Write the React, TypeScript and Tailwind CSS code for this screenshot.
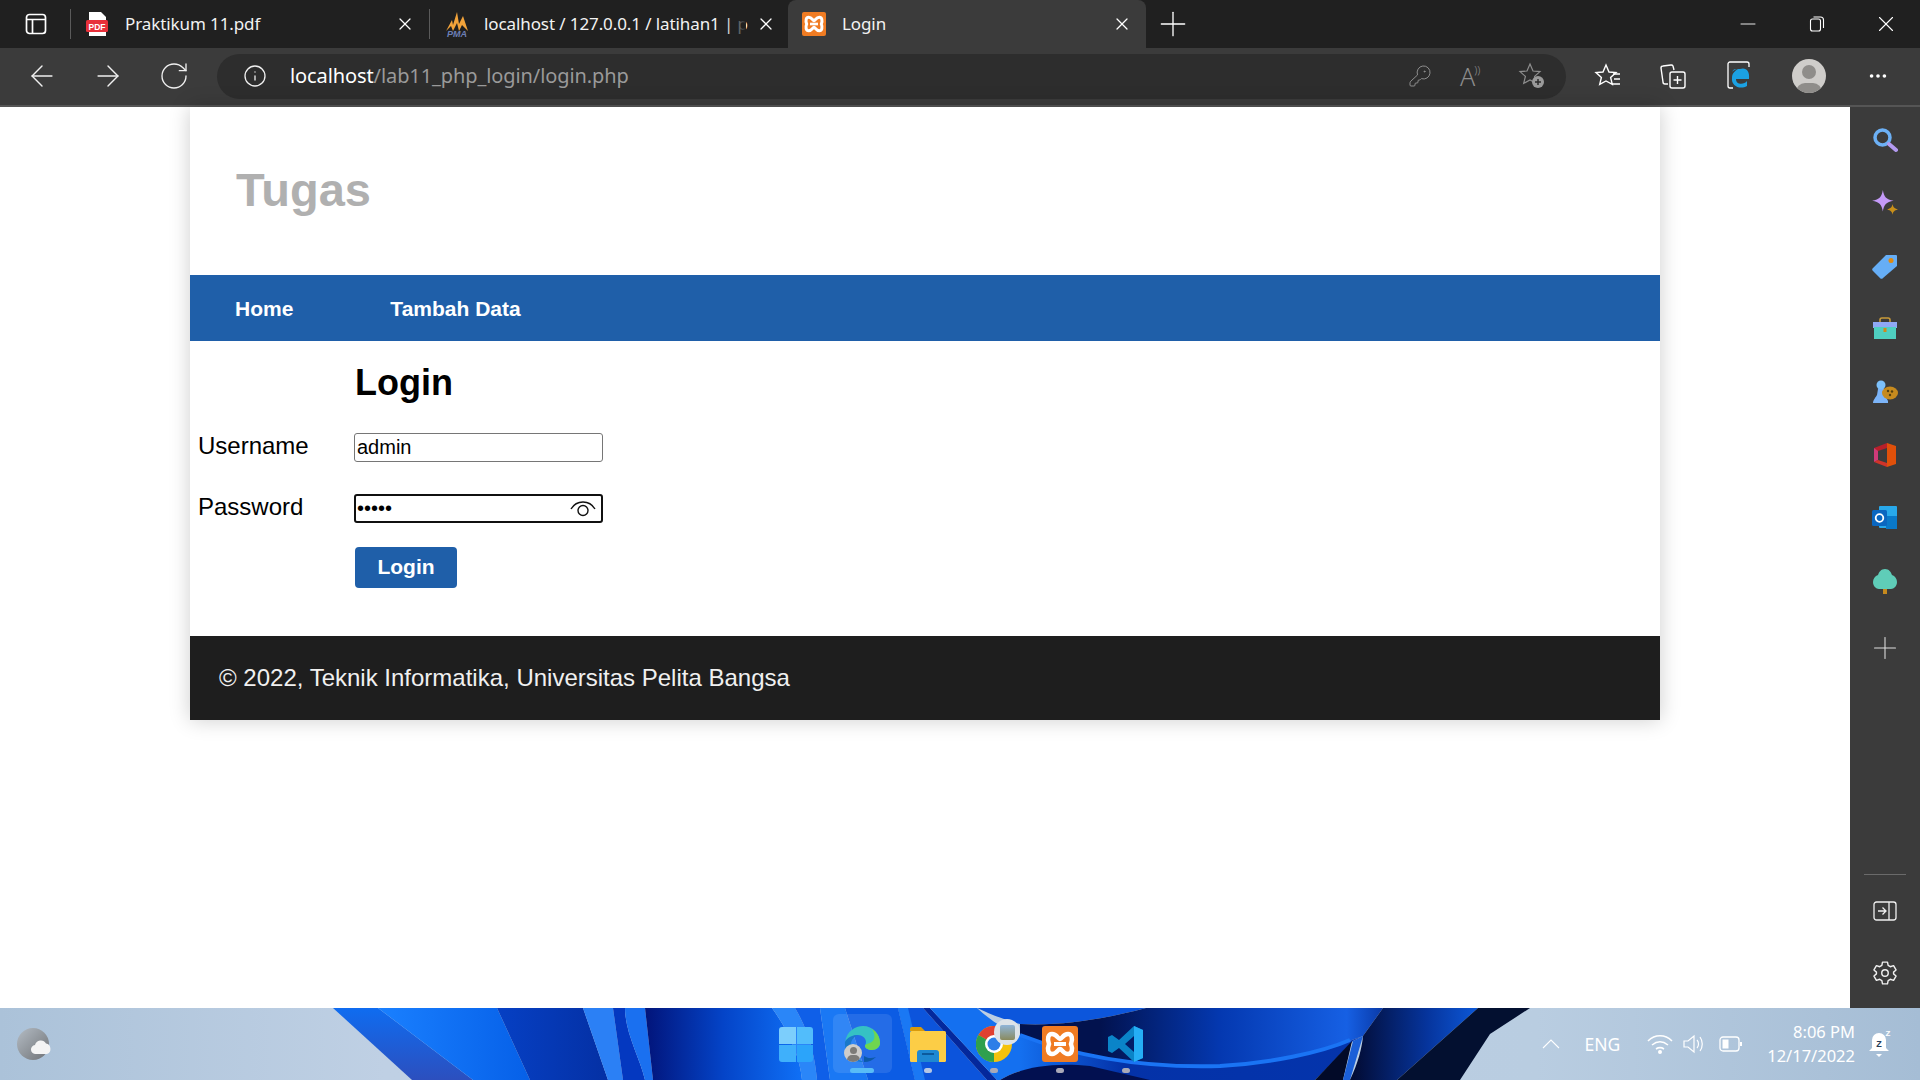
import { ArrowLeft, ArrowRight, RotateCw, Info, KeyRound, Plus, X, Minus, Ellipsis } from "lucide-react";

const ui = "font-['Noto_Sans','Open_Sans',sans-serif]";
const page = "font-['Liberation_Sans',Arial,sans-serif]";

function PdfIcon() {
  return (
    <svg width="24" height="26" viewBox="0 0 24 26">
      <path d="M4 1h12l5 5v19H4z" fill="#fff" />
      <rect x="1" y="9" width="22" height="12" rx="1.5" fill="#e8303a" />
      <text x="12" y="18.5" textAnchor="middle" fontSize="8.5" fontWeight="700" fill="#fff" fontFamily="Liberation Sans">PDF</text>
    </svg>
  );
}

function PmaIcon() {
  return (
    <svg width="26" height="26" viewBox="0 0 26 26">
      <path d="M2 20 L8 9 L9 14 L13 1 L15 13 L19 5 L24 20 L18 14 L15 20 L13 12 L9 20 L7 15z" fill="#f2a33a" />
      <text x="13" y="25.5" textAnchor="middle" fontSize="9" fontWeight="700" fontStyle="italic" fill="#6d7fb5" fontFamily="Liberation Sans">PMA</text>
    </svg>
  );
}

function XamppIcon({ size = 24 }: { size?: number }) {
  return (
    <svg width={size} height={size} viewBox="0 0 36 36">
      <rect width="36" height="36" rx="3" fill="#f07c23" />
      <path d="M10 8c5 0 6 5 8 5s3-5 8-5c4 0 5 5 3 10 2 5 1 10-3 10-5 0-6-5-8-5s-3 5-8 5c-4 0-5-5-3-10-2-5-1-10 3-10z" fill="none" stroke="#fff" strokeWidth="4.5" />
      <path d="M12 18h12" stroke="#fff" strokeWidth="4" />
    </svg>
  );
}

function Tab({ icon, title, active, fade }: { icon: React.ReactNode; title: string; active?: boolean; fade?: boolean }) {
  return (
    <div className={`relative flex h-full w-[358px] items-center pl-[14px] pr-[14px] ${active ? "rounded-t-lg bg-[#3b3b3b]" : ""}`}>
      <div className="flex w-[40px] shrink-0 items-center">{icon}</div>
      <span className="relative flex-1 whitespace-nowrap text-[17px] tracking-[-0.1px] text-[#f2f2f2]">
        {title}
        {fade && <span className="absolute right-[2px] top-0 h-full w-[20px] bg-gradient-to-r from-transparent to-[#202020]" />}
      </span>
      <X className="ml-[8px] shrink-0 text-white" size={20} strokeWidth={1.5} />
    </div>
  );
}

function TabBar() {
  return (
    <div className={`flex h-[48px] items-center bg-[#202020] ${ui}`}>
      <div className="flex w-[70px] items-center justify-center pl-[1px]">
        <svg width="22" height="22" viewBox="0 0 22 22" fill="none" stroke="#fff" strokeWidth="1.7">
          <rect x="1.5" y="1.5" width="19" height="19" rx="3" />
          <path d="M1.5 6.5h19M7.5 6.5v14" />
        </svg>
      </div>
      <div className="h-[30px] w-px bg-[#5a5a5a]" />
      <Tab icon={<PdfIcon />} title="Praktikum 11.pdf" />
      <div className="h-[30px] w-px bg-[#5a5a5a]" />
      <Tab icon={<PmaIcon />} title="localhost / 127.0.0.1 / latihan1 | p" fade />
      <Tab icon={<XamppIcon />} title="Login" active />
      <Plus className="ml-[7px] text-white" size={40} strokeWidth={0.8} />
      <div className="ml-auto flex items-center">
        <div className="flex w-[69px] justify-center"><Minus className="text-white" size={24} strokeWidth={0.9} /></div>
        <div className="flex w-[69px] justify-center">
          <svg width="16" height="16" viewBox="0 0 16 16" fill="none" stroke="#fff" strokeWidth="1.1">
            <rect x="1.5" y="3" width="10" height="12" rx="2" />
            <path d="M4.5 1h7a3 3 0 0 1 3 3v8" />
          </svg>
        </div>
        <div className="flex w-[69px] justify-center"><X className="text-white" size={26} strokeWidth={1} /></div>
      </div>
    </div>
  );
}

function ToolBar() {
  return (
    <div className={`flex h-[59px] items-center border-b-2 border-[#555] bg-[#3b3b3b] pb-[1px] ${ui}`}>
      <div className="flex w-[217px] items-center pl-[25px] text-[#f0f0f0]">
        <ArrowLeft size={34} strokeWidth={1} />
        <ArrowRight className="ml-[32px]" size={34} strokeWidth={1} />
        <RotateCw className="ml-[33px]" size={32} strokeWidth={1} />
      </div>
      <div className="flex h-[45px] w-[1349px] items-center rounded-full bg-[#2d2d2d] pl-[26px] pr-[20px]">
        <Info className="text-[#f0f0f0]" size={24} strokeWidth={1.3} />
        <span className="ml-[23px] text-[20px] tracking-[-0.1px] text-white">
          localhost<span className="text-[#9a9a9a]">/lab11_php_login/login.php</span>
        </span>
        <div className="ml-auto flex items-center gap-[28px] text-[#8e8e8e]">
          <KeyRound size={24} strokeWidth={1} />
          <span className="flex w-[30px] items-start text-[25px] font-light leading-none">A<span className="-ml-[1px] text-[11px]">))</span></span>
          <svg width="28" height="28" viewBox="0 0 28 28" fill="none" stroke="#8e8e8e" strokeWidth="1.2">
            <path d="M12 2l3 7 7 .6-5.4 4.8 1.7 7L12 18l-6.300 3.400 1.700-7L2 9.600 9 9z" />
            <circle cx="20" cy="20" r="6" fill="#9a9a9a" stroke="none" />
            <path d="M20 17v6M17 20h6" stroke="#2d2d2d" strokeWidth="1.5" />
          </svg>
        </div>
      </div>
      <div className="flex flex-1 items-center pl-[28px] text-white">
        <svg width="28" height="28" viewBox="0 0 28 28" fill="none" stroke="#fff" strokeWidth="1.4">
          <path d="M12 3l3 7 7 .6-5.400 4.800 1.700 7L12 19l-6.300 3.400 1.700-7L2 10.600 9 10z" />
          <path d="M19 12h7M20 17h6M18 22h8" />
        </svg>
        <svg className="ml-[37px]" width="28" height="28" viewBox="0 0 28 28" fill="none" stroke="#fff" strokeWidth="1.4">
          <path d="M9 22H6a2 2 0 0 1-2-2L2 6a2 2 0 0 1 2-2l8-1a2 2 0 0 1 2 1l1 4" />
          <rect x="11" y="10" width="15" height="16" rx="2" fill="#3b3b3b" />
          <path d="M18.500 14v8M14.500 18h8" />
        </svg>
        <svg className="ml-[38px]" width="28" height="32" viewBox="0 0 28 32" fill="none">
          <path d="M8 28H5a2 2 0 0 1-2-2V4a2 2 0 0 1 2-2h17a2 2 0 0 1 2 2v3" stroke="#fff" strokeWidth="1.3" />
          <path d="M15 9c6-2 10 2 9 10H11c0 6 8 6 11 2v5c-7 4-16 0-15-8 0-5 3-7 6-9-3 0-5 2-6 3 1-2 2-3 4-3z" fill="#1ba1e2" />
        </svg>
        <div className="relative ml-[39px] h-[34px] w-[34px] overflow-hidden rounded-full bg-[#cfcdca]">
          <div className="mx-auto mt-[6px] h-[14px] w-[14px] rounded-full bg-[#8f8d8a]" />
          <div className="absolute -bottom-[8px] left-[4px] h-[18px] w-[26px] rounded-full bg-[#8f8d8a]" />
        </div>
        <Ellipsis className="ml-[41px]" size={22} />
      </div>
    </div>
  );
}

function Sidebar() {
  return (
    <aside className="flex w-[70px] shrink-0 flex-col items-center bg-[#3b3b3b] pt-[20px] pb-[22px]">
      <div className="flex flex-col items-center gap-[37px]">
        <svg width="26" height="26" viewBox="0 0 26 26" fill="none">
          <circle cx="10.500" cy="10.500" r="7.500" stroke="#6cb0f5" strokeWidth="3.500" />
          <path d="M17 17l7 6" stroke="#b39af0" strokeWidth="4" strokeLinecap="round" />
        </svg>
        <svg width="28" height="26" viewBox="0 0 26 24">
          <path d="M11 0c1 6 3 9 10 10-7 1-9 4-10 10-1-6-3-9-10-10 7-1 9-4 10-10z" fill="#c49af8" />
          <path d="M20 13c.5 3 1.500 4 5 5-3.500 1-4.500 2-5 5-.5-3-1.500-4-5-5 3.500-1 4.500-2 5-5z" fill="#c88f1a" />
        </svg>
        <svg width="26" height="26" viewBox="0 0 26 26">
          <path d="M1 15L14 2h10a1 1 0 0 1 1 1v10L11 25a2 2 0 0 1-3 0L1 18a2 2 0 0 1 0-3z" fill="#66aef6" />
          <circle cx="19" cy="7.500" r="2.500" fill="#e08a10" />
        </svg>
        <svg width="26" height="26" viewBox="0 0 26 26">
          <path d="M8 7V4a2 2 0 0 1 2-2h6a2 2 0 0 1 2 2v3" fill="none" stroke="#c89a3a" strokeWidth="1.600" />
          <rect x="1" y="6" width="24" height="6" fill="#8fa8f5" />
          <rect x="2" y="11" width="22" height="12" fill="#4fcfc0" />
          <rect x="11.500" y="12" width="3" height="4" fill="#d08a1a" />
        </svg>
        <svg width="26" height="26" viewBox="0 0 26 26">
          <circle cx="9" cy="6" r="4.500" fill="#7cc0fa" />
          <path d="M6 10h6l1 6 3 6v2H1c0-3 3-6 4-8z" fill="#7cb4f8" />
          <ellipse cx="18" cy="14" rx="8" ry="6.500" fill="#c68a1e" />
          <circle cx="16" cy="12" r="1.200" fill="#55400f" />
          <circle cx="20" cy="12.500" r="1.200" fill="#55400f" />
          <circle cx="18" cy="16" r="1.200" fill="#55400f" />
        </svg>
        <svg width="26" height="26" viewBox="0 0 26 26">
          <path d="M2 6l13-5v5L6 9v9l-4 2z" fill="#b8202a" />
          <path d="M2 6l4 3v9l-4 2z" fill="#cf3a7a" />
          <path d="M2 20l4-2 9 3v4z" fill="#d0342a" />
          <path d="M15 1l9 3v18l-9 3z" fill="#e0500a" />
        </svg>
        <svg width="26" height="26" viewBox="0 0 26 26">
          <rect x="7" y="1" width="18" height="22" rx="1" fill="#28a8ea" />
          <rect x="14" y="11" width="11" height="13" fill="#0a78c8" />
          <rect x="0" y="5" width="15" height="16" rx="1.500" fill="#0a66c0" />
          <circle cx="7.500" cy="13" r="3.800" fill="none" stroke="#fff" strokeWidth="1.800" />
        </svg>
        <svg width="26" height="26" viewBox="0 0 26 26">
          <rect x="11" y="19" width="4" height="7" fill="#c68a1e" />
          <path d="M13 1c4 0 6 3 7 6 3 1 5 4 5 7 0 4-3 7-6 7H7c-3 0-6-3-6-7 0-3 2-6 5-7 1-3 3-6 7-6z" fill="#5fcdb8" />
        </svg>
      </div>
      <Plus className="mt-[36px] text-[#e0e0e0]" size={36} strokeWidth={0.7} />
      <div className="mt-auto h-px w-[42px] bg-[#6a6a6a]" />
      <svg className="mt-[26px]" width="24" height="20" viewBox="0 0 24 20" fill="none" stroke="#f0f0f0" strokeWidth="1.300">
        <rect x="1" y="1" width="22" height="18" rx="2.500" />
        <path d="M16 1v18M5 10h8M9.500 6.500L13 10l-3.500 3.500" />
      </svg>
      <svg className="mt-[39px]" width="26" height="26" viewBox="0 0 24 24" fill="none" stroke="#f0f0f0" strokeWidth="1.300" strokeLinejoin="round">
        <path d="M9.700 2h4.600l.6 3 2 1.200 3-1 2.300 4-2.300 2v1.600l2.300 2-2.300 4-3-1-2 1.200-.6 3H9.700l-.6-3-2-1.200-3 1-2.300-4 2.300-2v-1.600l-2.300-2 2.300-4 3 1 2-1.200z" />
        <circle cx="12" cy="12" r="3" />
      </svg>
    </aside>
  );
}

function Field({ label, children }: { label: string; children: React.ReactNode }) {
  return (
    <div className="flex h-[29px] items-center">
      <label className="w-[164px] pl-[8px] pb-[4px] text-[24px] text-black">{label}</label>
      {children}
    </div>
  );
}

function WebPage() {
  return (
    <main className={`min-w-0 flex-1 bg-white ${page}`}>
      <div className="ml-[190px] w-[1470px] shadow-[0_0_20px_rgba(0,0,0,0.2)]">
        <header className="flex h-[168px] items-center pb-[2px] pl-[46px]">
          <h1 className="text-[47px] font-bold text-[#b0b0b0]">Tugas</h1>
        </header>
        <nav className="flex h-[66px] items-center bg-[#1f5fa9] pl-[45px] pt-[1px] text-[21px] font-bold text-white">
          <a>Home</a>
          <a className="ml-[97px]">Tambah Data</a>
        </nav>
        <div className="h-[295px]">
          <h2 className="pl-[165px] pt-[21px] text-[36px] leading-[42px] font-bold text-black">Login</h2>
          <div className="mt-[29px]">
            <Field label="Username">
              <div className="flex h-[29px] w-[249px] items-center rounded-[3px] border border-[#767676] pb-[1px] pl-[2px] text-[20px] text-black">admin</div>
            </Field>
            <div className="mt-[32px]">
              <Field label="Password">
                <div className="flex h-[29px] w-[249px] items-center justify-between rounded-[3px] border-[2.500px] border-[#101010] pl-[1px] pr-[5px]">
                  <span className="pb-[2px] text-[20px] leading-none text-black">•••••</span>
                  <svg width="26" height="17" viewBox="0 0 26 17" fill="none" stroke="#111" strokeWidth="1.400">
                    <path d="M1 9c3-5 7-7 12-7s9 2 12 7" />
                    <circle cx="13" cy="10.500" r="5" />
                  </svg>
                </div>
              </Field>
            </div>
            <button className="ml-[165px] mt-[24px] h-[41px] w-[102px] rounded-[4px] bg-[#1f5fa9] pb-[2px] text-[21px] font-bold text-white">Login</button>
          </div>
        </div>
        <footer className="flex h-[84px] items-center bg-[#1e1e1e] pl-[29px] text-[24px] text-[#f0f0f0]">
          © 2022, Teknik Informatika, Universitas Pelita Bangsa
        </footer>
      </div>
    </main>
  );
}

function Wallpaper() {
  return (
    <svg className="absolute inset-0" width="1920" height="72" viewBox="0 0 1920 72">
      <defs>
        <linearGradient id="wpBase" x1="0" x2="1" y1="0" y2="0">
          <stop offset="0" stopColor="#abc2d9" />
          <stop offset="0.2" stopColor="#bfd0e4" />
          <stop offset="0.8" stopColor="#b9cde1" />
          <stop offset="1" stopColor="#a5bdd5" />
        </linearGradient>
        <linearGradient id="wpEdge" x1="0" x2="0" y1="0" y2="1">
          <stop offset="0" stopColor="#0f6cf0" />
          <stop offset="1" stopColor="#2c4fbe" />
        </linearGradient>
        <linearGradient id="wpBright" x1="0" x2="1" y1="0" y2="0">
          <stop offset="0" stopColor="#1a80ff" />
          <stop offset="1" stopColor="#0660e8" />
        </linearGradient>
        <linearGradient id="wpDeep" x1="0" x2="1" y1="0" y2="0">
          <stop offset="0" stopColor="#0640c4" />
          <stop offset="1" stopColor="#0430a4" />
        </linearGradient>
        <linearGradient id="wpNavy" x1="0" x2="1" y1="0" y2="0">
          <stop offset="0" stopColor="#02147a" />
          <stop offset="0.5" stopColor="#0444c8" />
          <stop offset="1" stopColor="#0f70f6" />
        </linearGradient>
        <linearGradient id="wpUpper" x1="0" x2="1" y1="0" y2="0">
          <stop offset="0" stopColor="#02124e" />
          <stop offset="0.22" stopColor="#02124e" />
          <stop offset="0.55" stopColor="#0438b0" />
          <stop offset="0.9" stopColor="#1660e4" />
          <stop offset="1" stopColor="#0a3aa8" />
        </linearGradient>
        <linearGradient id="wpLower" x1="0" x2="1" y1="0" y2="0">
          <stop offset="0" stopColor="#1470f0" />
          <stop offset="0.3" stopColor="#0432a8" />
          <stop offset="1" stopColor="#0434ac" />
        </linearGradient>
        <linearGradient id="wpFold" x1="0" x2="1" y1="0" y2="0">
          <stop offset="0" stopColor="#020a30" />
          <stop offset="0.6" stopColor="#06349c" />
          <stop offset="1" stopColor="#0c58d8" />
        </linearGradient>
      </defs>
      <rect width="1920" height="72" fill="url(#wpBase)" />
      <path d="M333 0H378L473 72H412z" fill="url(#wpEdge)" />
      <path d="M378 0H497L530 72H473z" fill="url(#wpBright)" />
      <path d="M497 0H583L608 72H530z" fill="url(#wpDeep)" />
      <path d="M583 0H613L623 72H608z" fill="#2b80f5" />
      <path d="M613 0H625C625 25 640 50 645 72H623z" fill="#0438c0" />
      <path d="M625 0H645L653 72H645C640 50 625 25 625 0z" fill="#1a70f0" />
      <path d="M645 0H772C790 25 800 50 802 72H653z" fill="url(#wpNavy)" />
      <path d="M772 0H795C810 25 815 50 817 72H802C800 50 790 25 772 0z" fill="#2a86f8" />
      <path d="M795 0H820L830 72H817C815 50 810 25 795 0z" fill="#0f5fe8" />
      <path d="M820 0H845L868 72H830z" fill="#1a78f4" />
      <path d="M845 0H898L915 72H868z" fill="#0c5ce4" />
      <path d="M898 0H923L987 72H915z" fill="#0c54dc" />
      <path d="M898 0H908L925 72H915z" fill="#1a78f4" />
      <path d="M923 0H930L997 72H987z" fill="#04289c" />
      <path d="M930 0H977C990 12 1005 22 1020 27L1100 50L1090 58C1050 54 1020 60 1000 72H997z" fill="#1470f0" />
      <path d="M977 0H1146C1100 12 1060 18 1020 16C1005 12 990 6 977 0z" fill="#0c56dc" />
      <path d="M1020 16C1060 18 1100 12 1146 0H1383L1363 28C1320 45 1270 55 1220 58C1150 60 1080 50 1020 27z" fill="url(#wpUpper)" />
      <path d="M1020 27C1080 50 1150 60 1220 58C1270 55 1320 45 1363 28L1353 33L1315 72H1020z" fill="url(#wpLower)" />
      <path d="M1000 72C1020 60 1050 54 1090 58L1150 72z" fill="#021050" />
      <path d="M1020 27C1080 50 1150 60 1220 58C1270 55 1320 45 1350 32" fill="none" stroke="#1a74f4" strokeWidth="4" />
      <path d="M1352 33L1315 72H1343z" fill="#020a28" />
      <path d="M1363 28L1353 33L1343 72H1350z" fill="#1a5fd8" />
      <path d="M1383 0H1478L1397 72H1350C1358 55 1362 40 1363 28z" fill="url(#wpFold)" />
      <path d="M1478 0H1530L1490 26L1460 72H1397z" fill="#031030" />
    </svg>
  );
}

function TaskbarIcons() {
  return (
    <div className="relative ml-[2px] flex items-center gap-[30px]">
      <div className="absolute left-[55px] top-[-12px] h-[59px] w-[59px] rounded-[6px] bg-white/10" />
      <div className="relative grid h-[35px] w-[36px] grid-cols-2 gap-[1px] px-[1px]">
        <div className="rounded-tl-[3px] bg-[#7ccefc]" />
        <div className="rounded-tr-[3px] bg-[#52bdfb]" />
        <div className="rounded-bl-[3px] bg-[#3fb0fb]" />
        <div className="rounded-br-[3px] bg-[#2ba4fa]" />
      </div>
      <div className="relative h-[36px] w-[36px]">
        <svg width="36" height="36" viewBox="0 0 36 36">
          <path d="M1 16C3 5 11 0 19 0c10 0 17 8 17 17 0 4-3 7-8 7-4 0-7-2-7-4 0-1 1-2 1-4 0-4-4-7-8-7C8 9 3 12 1 16z" fill="#35c1c4" />
          <path d="M28 24c4 0 8-3 8-7 0-6-3-11-8-14 4 6 3 12-2 14-2 1-5 1-5 3 0 2 3 4 7 4z" fill="#6fd64f" />
          <path d="M1 16c2-4 7-7 13-7-7 3-8 9-7 15 1 5 6 10 13 12C9 37 0 28 1 16z" fill="#1a78c9" />
          <path d="M20 36c5 0 9-2 12-5-5 2-9 1-12-1z" fill="#0c5aa8" />
        </svg>
        <div className="absolute bottom-0 left-0 h-[18px] w-[18px] overflow-hidden rounded-full bg-[#cfcdca]">
          <div className="mx-auto mt-[3px] h-[7px] w-[7px] rounded-full bg-[#7d7b78]" />
          <div className="mx-auto mt-[1px] h-[10px] w-[13px] rounded-full bg-[#7d7b78]" />
        </div>
        <div className="absolute -bottom-[11px] left-[6px] h-[5px] w-[24px] rounded-full bg-[#58bcf7]" />
      </div>
      <div className="relative h-[36px] w-[36px]">
        <svg width="36" height="36" viewBox="0 0 36 36">
          <path d="M0 3a2 2 0 0 1 2-2h9l4 4h-15z" fill="#d99a0c" />
          <rect y="5" width="36" height="31" rx="1.500" fill="#fccd46" />
          <path d="M7 36V27a3 3 0 0 1 3-3h16a3 3 0 0 1 3 3v9z" fill="#1e88d2" />
          <rect x="12" y="27" width="12" height="2" fill="#0c5a9c" />
        </svg>
        <div className="absolute -bottom-[11px] left-[14px] h-[5px] w-[8px] rounded-full bg-[#b4c6e4]" />
      </div>
      <div className="relative h-[36px] w-[36px]">
        <svg width="36" height="36" viewBox="0 0 36 36">
          <circle cx="18" cy="18" r="18" fill="#f4c20d" />
          <path d="M18 18L2.400 9A18 18 0 0 1 33.600 9z" fill="#e04030" />
          <path d="M18 18L2.400 9A18 18 0 0 0 18 36z" fill="#2fa04e" />
          <circle cx="18" cy="18" r="9" fill="#fff" />
          <circle cx="18" cy="18" r="6.500" fill="#2d7ee8" />
        </svg>
        <div className="absolute -right-[8px] -top-[7px] flex h-[26px] w-[26px] items-center justify-center rounded-full bg-[#dde3e8]">
          <div className="h-[15px] w-[15px] rounded-[2px] bg-gradient-to-b from-[#8fb4d8] to-[#8a8a5c]" />
        </div>
        <div className="absolute -bottom-[11px] left-[14px] h-[5px] w-[8px] rounded-full bg-[#a9a9b8]" />
      </div>
      <div className="relative h-[36px] w-[36px]">
        <XamppIcon size={36} />
        <div className="absolute -bottom-[11px] left-[14px] h-[5px] w-[8px] rounded-full bg-[#a9a9b8]" />
      </div>
      <div className="relative h-[36px] w-[36px]">
        <svg width="36" height="36" viewBox="0 0 36 36">
          <path d="M26 0l9 4v28l-9 4-15-14-7 5-4-2v-14l4-2 7 5zM26 10l-9 8 9 8z" fill="#0a84c8" fillRule="evenodd" />
          <path d="M26 0l9 4v28l-9 4z" fill="#25aef5" />
        </svg>
        <div className="absolute -bottom-[11px] left-[14px] h-[5px] w-[8px] rounded-full bg-[#a9a9b8]" />
      </div>
    </div>
  );
}

function Tray() {
  return (
    <div className={`flex items-center justify-end pr-[28px] text-white ${ui}`}>
      <svg width="18" height="10" viewBox="0 0 18 10" fill="none" stroke="#fff" strokeWidth="1.100">
        <path d="M1 9l8-8 8 8" />
      </svg>
      <span className="ml-[24px] text-[17.500px]">ENG</span>
      <svg className="ml-[27px]" width="26" height="20" viewBox="0 0 26 20" fill="none" stroke="#fff" strokeWidth="1.600">
        <path d="M1 7c7-7 17-7 24 0M5 11c5-4 11-4 16 0M9 15c3-2 5-2 8 0" />
        <circle cx="13" cy="18" r="1.200" fill="#fff" />
      </svg>
      <svg className="ml-[9px]" width="24" height="20" viewBox="0 0 24 20" fill="none" stroke="#fff" strokeWidth="1.200">
        <path d="M2 7h4l6-5v16l-6-5H2z" />
        <path d="M15 6c2 2 2 6 0 8M18 3c3 4 3 10 0 14" />
      </svg>
      <svg className="ml-[13px]" width="24" height="16" viewBox="0 0 24 16" fill="none" stroke="#fff" strokeWidth="1.300">
        <rect x="1" y="1" width="19" height="14" rx="3" />
        <rect x="3.500" y="3.500" width="6" height="9" fill="#fff" stroke="none" />
        <path d="M22 6v4" strokeWidth="2" />
      </svg>
      <div className="ml-[24px] flex flex-col items-end text-[16.500px] leading-[24px]">
        <span>8:06 PM</span>
        <span>12/17/2022</span>
      </div>
      <svg className="ml-[13px]" width="24" height="32" viewBox="0 0 24 32">
        <path d="M11 5a7 7 0 0 1 7 7v8l3 3H1l3-3v-8a7 7 0 0 1 7-7z" fill="#fff" />
        <path d="M8 26h6l-3 3z" fill="#fff" />
        <text x="11" y="19" textAnchor="middle" fontSize="9" fontWeight="700" fill="#243a56" fontFamily="Liberation Sans">Z</text>
        <text x="20" y="8" textAnchor="middle" fontSize="8" fontWeight="700" fill="#fff" fontFamily="Liberation Sans">Z</text>
      </svg>
    </div>
  );
}

function Taskbar() {
  return (
    <div className="relative grid h-[72px] grid-cols-[1fr_auto_1fr] items-center">
      <Wallpaper />
      <div className="relative pl-[17px]">
        <svg width="34" height="32" viewBox="0 0 34 32">
          <defs>
            <linearGradient id="wxGray" x1="0" x2="1" y1="0" y2="1">
              <stop offset="0" stopColor="#b4bcc4" />
              <stop offset="1" stopColor="#6f7276" />
            </linearGradient>
          </defs>
          <circle cx="16" cy="16" r="16" fill="url(#wxGray)" />
          <path d="M19 26a4.500 4.500 0 0 1-1-9 6 6 0 0 1 11-1.500 5.500 5.500 0 0 1 1 10.500z" fill="#f4f4f4" />
        </svg>
      </div>
      <TaskbarIcons />
      <div className="relative">
        <Tray />
      </div>
    </div>
  );
}

export default function App() {
  return (
    <div className="flex h-[1080px] w-[1920px] flex-col overflow-hidden">
      <TabBar />
      <ToolBar />
      <div className="flex min-h-0 flex-1">
        <WebPage />
        <Sidebar />
      </div>
      <Taskbar />
    </div>
  );
}
